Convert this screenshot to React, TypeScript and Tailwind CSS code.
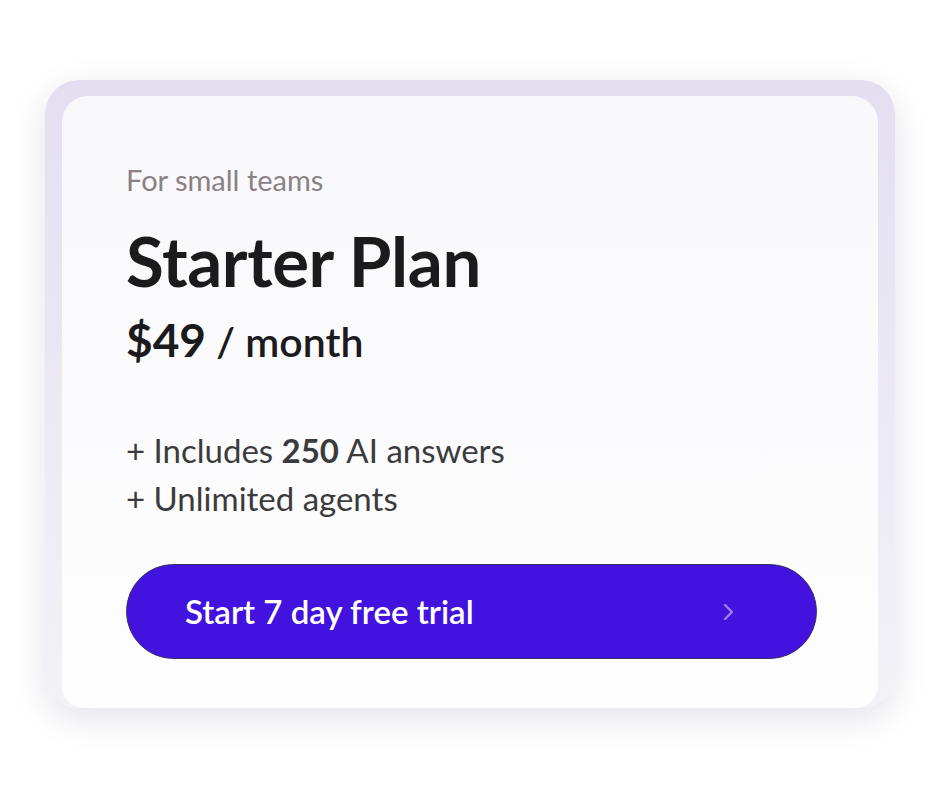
export default function App() {
  return (
    <div className="w-[940px] h-[788px] bg-white pt-[80px] pl-[45px] font-['Lato','Noto_Sans',sans-serif]">
      {/* frame */}
      <div className="w-[850px] h-[628px] rounded-[34px] bg-gradient-to-b from-[#e3dff1] to-[#f3f2f7] pt-4 px-[17px] shadow-[0_10px_34px_rgba(40,30,80,0.13)] flex">
        {/* card */}
        <div className="flex-1 rounded-t-[26px] rounded-b-[22px] bg-gradient-to-b from-[#f8f7fb] to-[#fefefe] pl-16 pr-[61px] pt-[66px] flex flex-col">
          <p className="text-[29px] leading-9 text-[#8a8184]">For small teams</p>
          <h1 className="mt-[27px] text-[69px] leading-[72px] font-bold text-[#1b1b1d] tracking-[-0.4px]">Starter Plan</h1>
          <p className="mt-[17px] text-[#1b1b1d] leading-[52px]">
            <span className="text-[46px] font-bold">$49</span>
            <span className="text-[41px] font-semibold"> / month</span>
          </p>
          <ul className="mt-[49px] text-[33px] leading-[48px] text-[#3b3b3d]">
            <li>
              + Includes <span className="font-bold">250</span> AI answers
            </li>
            <li>+ Unlimited agents</li>
          </ul>
          <button className="mt-[42px] h-[95px] w-full rounded-full bg-[#4212de] border-[1.5px] border-[#3a2e5c] flex items-center justify-between pl-[58px] pr-[82px] text-white text-[33px] font-semibold">
            <span>Start 7 day free trial</span>
            <svg width="12" height="20" viewBox="0 0 12 20" fill="none" stroke="#a07ff2" strokeWidth="2.4" strokeLinecap="round" strokeLinejoin="round">
              <path d="M3 3l7 7-7 7" />
            </svg>
          </button>
        </div>
      </div>
    </div>
  );
}
